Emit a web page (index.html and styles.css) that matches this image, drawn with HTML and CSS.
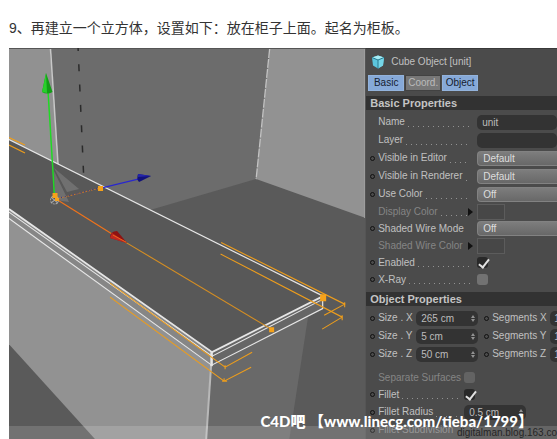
FILE: index.html
```html
<!DOCTYPE html>
<html lang="zh-CN">
<head>
<meta charset="utf-8">
<title>Cube Object</title>
<link rel="stylesheet" href="styles.css">
</head>
<body>
<p class="step">9、再建立一个立方体，设置如下：放在柜子上面。起名为柜板。</p>
<main class="shot">
  <svg class="scene" viewBox="9 48 356 391" preserveAspectRatio="xMinYMin slice" role="img" aria-label="3D viewport">
    <rect x="9" y="48" width="360" height="400" fill="#5a5a5a"/>
    <path d="M50 48H271L256 179L150 210L58 164Z" fill="#6c6c6c"/>
    <path d="M9 48H50L58 164L9 140Z" fill="#919191"/>
    <path d="M270 48H366V218L256 179Z" fill="#929292"/>
    <path d="M364.500 48V218" stroke="#a0a0a0" fill="none"/>
    <path d="M9 48.500H366" stroke="#555"/>
    <path d="M50.500 49L58 164" stroke="#c8c8c8" stroke-width="1.500"/>
    <path d="M269.500 49L256 179" stroke="#c4c4c4" stroke-width="1.300" stroke-dasharray="9 1"/>
    <path d="M78 47L83.500 173" stroke="#2b2b2b" stroke-width="1.500" stroke-dasharray="7 13.300" stroke-dashoffset="3"/>
    <path d="M9 140L323 297L212 352L9 209Z" fill="#585858"/>
    <path d="M9 219L211 365L206 440H96L9 344Z" fill="#929292"/>
    <path d="M211 365L308 316L289 440H206Z" fill="#696969"/>
    <path d="M9 210L212 353V365L9 219Z" fill="#868686"/>
    <path d="M212 353L323 297V308L212 365Z" fill="#666"/>
    <path d="M211 365L206 440" stroke="#b8b8b8" stroke-width="2"/>
    <path d="M54 168L79 189L67 192ZM54 171L69 202L55 200Z" fill="#707070"/>
    <g fill="none" stroke="#e6e6e6">
      <path d="M9 139.500L323 296" stroke-width="1.200"/>
      <path d="M9 209L212 352L323 296" stroke-width="1.800"/>
      <path d="M9 212L212 356L322 299.500" stroke-width="1"/>
      <path d="M9 218.500L211.500 365L322.500 308.500V297" stroke-width="1.200"/>
      <path d="M211.500 352V366" stroke-width="2.500"/>
    </g>
    <g fill="none" stroke="#ed9d1c" stroke-width="1.100">
      <path d="M9 137.500L25 145M9 145L25 153"/>
      <path d="M221 242.500L344.500 304L324 315M344.500 302V307"/>
      <path d="M220.500 254L342 317L322 329M342 315V320"/>
      <path d="M110 283L225 367L252 352M225 365V369"/>
      <path d="M110 297L224 381L251 367M222 381H227M224 378V381"/>
      <path d="M122 240L271 329" stroke="#d58e22"/>
    </g>
    <path d="M56 199L120 239" stroke="#ef731b" stroke-width="1.200"/>
    <path d="M56 199L100 188" stroke="#c8772b" stroke-dasharray="2 1"/>
    <path d="M61 197.500L97 188.500" stroke="#34348b" stroke-dasharray="1 3"/>
    <path d="M54.500 197L48 91" stroke="#20da25" stroke-width="1.500"/>
    <path d="M46 73L42 92Q47 95 52.500 92Z" fill="#129d16"/>
    <path d="M46 73L42 92L47 93Z" fill="#28cf2b"/>
    <path d="M103 187.500L138 179" stroke="#2927cf" stroke-width="1.200"/>
    <path d="M151 176L138 174Q136 179 139 182Z" fill="#11117a"/>
    <path d="M151 176L138 174L138 177Z" fill="#2525ad"/>
    <path d="M127 243L117 231Q110 231 110 238Z" fill="#8e1212"/>
    <path d="M127 243L112 233L110 238Z" fill="#bf2820"/>
    <path d="M113 235L126 242" stroke="#ef641b"/>
    <circle cx="54.500" cy="200" r="4" fill="none" stroke="#aaa" stroke-dasharray="2 1"/>
    <path d="M51 197L58 203M51 203L58 197" stroke="#aaa"/>
    <path d="M52.500 193H57.500V198H59V201H55V198H52.500ZM98 186H103V191H98ZM269 327H274V332H269ZM320 294H326V301H320Z" fill="#f6a21a"/>
  </svg>

  <section class="panel">
    <header class="title">
      <svg class="cube" viewBox="0 0 14 14" aria-hidden="true">
        <path d="M7 .5L13 2.500L12 10.500L7 13.500L2 10.500L1 2.500Z" fill="#5cc5dc"/>
        <path d="M7 .5L13 2.500L7 5L1 2.500Z" fill="#a6edf6"/>
        <path d="M7 5L13 2.500L12 10.500L7 13.500Z" fill="#75d5e7"/>
        <path d="M1 2.500L7 5L13 2.500M7 5V13.500" fill="none" stroke="#28798e"/>
      </svg>
      <span>Cube Object [unit]</span>
    </header>
    <nav class="tabs">
      <button class="tab on">Basic</button>
      <button class="tab">Coord.</button>
      <button class="tab on">Object</button>
    </nav>

    <h2 class="bar">Basic Properties</h2>
    <div class="rows basic">
      <div class="row"><i></i><label for="name">Name</label><input class="field" id="name" value="unit"></div>
      <div class="row"><i></i><label for="layer">Layer</label><input class="field" id="layer"></div>
      <div class="row"><i class="key"></i><label for="editor">Visible in Editor</label><select class="pick" id="editor"><option>Default</option></select></div>
      <div class="row"><i class="key"></i><label for="renderer">Visible in Renderer</label><select class="pick" id="renderer"><option>Default</option></select></div>
      <div class="row"><i class="key"></i><label for="color">Use Color</label><select class="pick" id="color"><option>Off</option></select></div>
      <div class="row slim off"><i></i><label for="display">Display Color</label><b class="arrow"></b><button class="swatch" id="display" disabled></button></div>
      <div class="row slim"><i class="key"></i><label class="plain" for="wire">Shaded Wire Mode</label><select class="pick" id="wire"><option>Off</option></select></div>
      <div class="row slim off"><i></i><label class="plain" for="wirecolor">Shaded Wire Color</label><b class="arrow"></b><button class="swatch" id="wirecolor" disabled></button></div>
      <div class="row slim"><i class="key"></i><label for="enabled">Enabled</label><input class="tick" id="enabled" type="checkbox" checked></div>
      <div class="row slim"><i class="key"></i><label for="xray">X-Ray</label><input class="tick" id="xray" type="checkbox"></div>
    </div>

    <h2 class="bar">Object Properties</h2>
    <div class="rows sizes">
      <div class="row"><i class="key"></i><label class="plain" for="sx">Size . X</label><span class="spin"><input class="field" id="sx" value="265 cm"></span><i class="key"></i><label class="plain seg" for="gx">Segments X</label><input class="field" id="gx" value="1"></div>
      <div class="row"><i class="key"></i><label class="plain" for="sy">Size . Y</label><span class="spin"><input class="field" id="sy" value="5 cm"></span><i class="key"></i><label class="plain seg" for="gy">Segments Y</label><input class="field" id="gy" value="1"></div>
      <div class="row"><i class="key"></i><label class="plain" for="sz">Size . Z</label><span class="spin"><input class="field" id="sz" value="50 cm"></span><i class="key"></i><label class="plain seg" for="gz">Segments Z</label><input class="field" id="gz" value="1"></div>
    </div>
    <div class="rows fillet">
      <div class="row slim off"><i></i><label class="plain" for="separate">Separate Surfaces</label><input class="tick" id="separate" type="checkbox" disabled></div>
      <div class="row slim"><i class="key"></i><label for="fillet">Fillet</label><input class="tick" id="fillet" type="checkbox" checked></div>
      <div class="row"><i class="key"></i><label for="radius">Fillet Radius</label><span class="spin"><input class="field" id="radius" value="0.5 cm"></span></div>
      <div class="row off"><i class="key"></i><span class="plain">Fillet Subdivision</span></div>
    </div>
  </section>
  <div class="strip"></div>
  <div class="source">digitalman.blog.163.co</div>
  <div class="mark">C4D吧 【www.linecg.com/tieba/1799】</div>
</main>
</body>
</html>
```
FILE: styles.css
```css
* { box-sizing: border-box; }
body {
  display: flex;
  flex-direction: column;
  min-height: 100vh;
  margin: 0;
  background: #fff;
  overflow: hidden;
}
.step {
  margin: 0;
  padding: 18px 9px 10px;
  font: 14px/20px "Liberation Sans", "Noto Sans CJK SC", sans-serif;
  color: #333;
}
.shot {
  flex: 1;
  position: relative;
  display: grid;
  grid-template-columns: 13fr 7fr;
  margin-left: 9px;
  overflow: hidden;
}
.scene { display: block; width: 100%; height: 100%; min-height: 0; contain: size; }
.panel {
  min-width: 0;
  overflow: hidden;
  background: #4b4b4b;
  border-top: 1px solid #393939;
  border-left: 1px solid #555;
  color: #c0c0c0;
  font: 10px/16px "Liberation Sans", sans-serif;
  white-space: nowrap;
}
.title { display: flex; align-items: center; gap: 6px; height: 26px; padding-left: 5px; }
.cube { width: 14px; height: 14px; }
.tabs { display: flex; gap: 1px; padding: 0 2px 5px; }
.tab {
  height: 16px;
  width: 36px;
  padding: 0;
  border: 1px solid #424242;
  background: #777;
  color: #bbb;
  font: inherit;
  line-height: 14px;
}
.tab.on { background: #86a9d8; color: #15202f; border-color: #93b3dc; }
.bar {
  margin: 0;
  padding-left: 4px;
  background: #323232;
  color: #c4c4c4;
  font: bold 11px/14px "Liberation Sans", sans-serif;
}
.rows { display: grid; }
.basic { padding: 3px 0 4px; }
.sizes { padding: 3px 0 6px; }
.row { display: flex; align-items: center; height: 18px; padding-left: 4px; }
.slim { height: 17px; }
.row i { flex: none; width: 5px; height: 5px; margin-right: 3px; }
.row .key { border: 1px solid #111; border-radius: 50%; }
.row label { display: flex; flex: none; align-items: center; }
.row label::after {
  content: "";
  flex: 1;
  height: 9px;
  margin-left: 3px;
  background: repeating-linear-gradient(90deg, #929292 0 1px, transparent 1px 5px) left bottom / 100% 1px no-repeat;
}
.row .plain::after { content: none; }
.off { color: #858585; }
.basic label { width: 92px; margin-right: 7px; }
.basic .off label { width: 90px; margin-right: 0; }
.sizes label { width: 36px; margin-right: 2px; }
.sizes .seg { width: 56px; }
.fillet label { width: 82px; margin-right: 4px; }
.field, .pick {
  flex: 1 0 auto;
  width: 80px;
  height: 15px;
  padding: 0 5px;
  border: 0;
  border-radius: 5px;
  background: #333;
  color: #bcbcbc;
  font: inherit;
  line-height: 15px;
}
.pick {
  appearance: none;
  border: 1px solid #828282;
  border-right: 0;
  border-radius: 4px 0 0 4px;
  background: linear-gradient(#7d7d7d, #686868);
  color: #ddd;
  line-height: 13px;
}
.seg + .field { padding-left: 4px; }
.spin { position: relative; flex: none; display: flex; width: 62px; margin-right: 6px; }
.spin .field { flex: 1; width: 0; }
.spin::before, .spin::after { content: ""; position: absolute; right: 3px; border: 2px solid transparent; }
.spin::before { top: 2px; border-bottom: 3px solid #929292; }
.spin::after { bottom: 2px; border-top: 3px solid #929292; }
.arrow { width: 5px; margin-right: 4px; border: 4px solid transparent; border-left: 5px solid #111; border-right: 0; }
.swatch { width: 28px; height: 16px; padding: 0; border: 1px solid #5c5c5c; background: #474747; }
.tick {
  appearance: none;
  position: relative;
  flex: none;
  width: 11px;
  height: 11px;
  margin: 0;
  border-radius: 3px;
  background: #727272;
}
.tick:disabled { background: #636363; }
.tick:checked { background: #292929; }
.tick:checked::after {
  content: "";
  position: absolute;
  left: 4px;
  top: 0;
  width: 4px;
  height: 9px;
  border: solid #e2e2e2;
  border-width: 0 2px 2px 0;
  transform: rotate(38deg);
}
.strip { position: absolute; inset: auto 0 0; height: 13px; background: #ffffff26; }
.source {
  position: absolute;
  right: 0;
  bottom: -2px;
  color: #252525;
  font: 10px/16px "Liberation Sans", sans-serif;
  white-space: nowrap;
}
.mark {
  position: absolute;
  right: 24px;
  bottom: 8px;
  color: #fff;
  font: 900 15px/20px Lato, "Noto Sans CJK SC", sans-serif;
  white-space: pre;
}
```
